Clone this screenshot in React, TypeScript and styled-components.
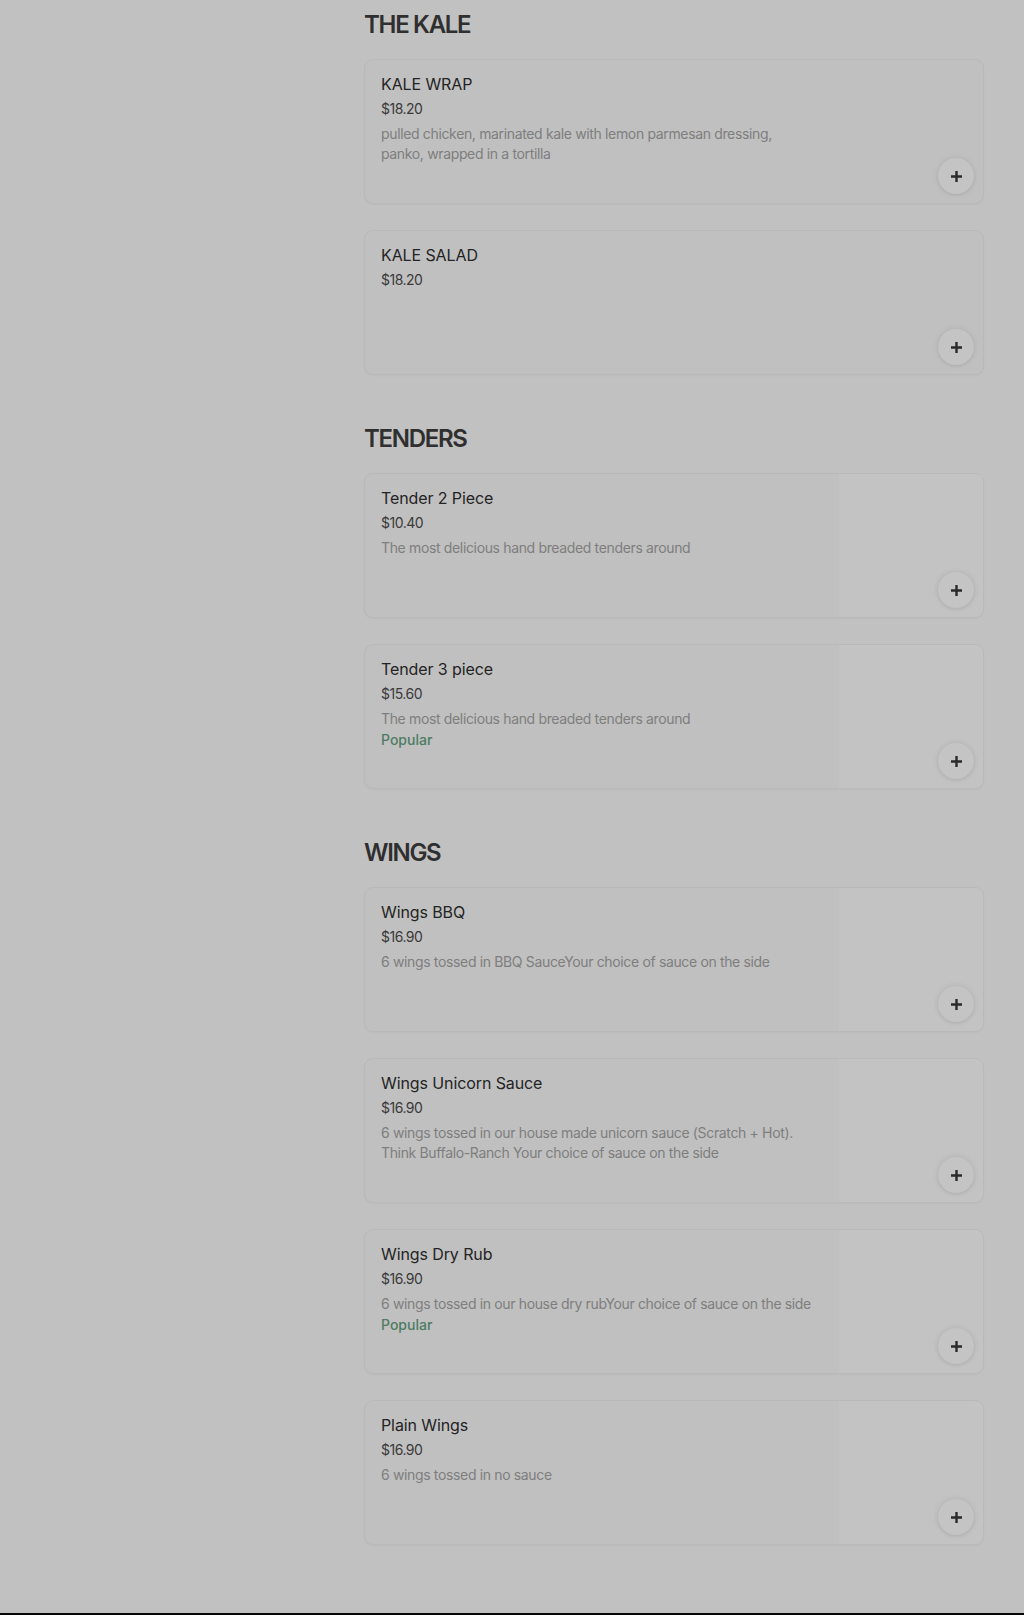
import React from "react";
import styled, { createGlobalStyle } from "styled-components";

const GlobalStyle = createGlobalStyle`
  html, body {
    margin: 0;
    padding: 0;
    background: #c1c1c1;
  }
  body {
    font-family: Inter, "Noto Sans", "Liberation Sans", sans-serif;
    -webkit-font-smoothing: antialiased;
  }
  * { box-sizing: border-box; }
`;

const Page = styled.div`
  display: grid;
  grid-template-columns: 364px 620px;
  padding: 9px 40px 68px 0;
  background: #c1c1c1;
`;

const Sidebar = styled.aside``;

const Main = styled.main`
  display: flex;
  flex-direction: column;
  gap: 48px;
`;

const Section = styled.section`
  display: flex;
  flex-direction: column;
`;

const SectionTitle = styled.h2`
  margin: 0 0 18px;
  font-family: Inter, "Liberation Sans", sans-serif;
  font-size: 24px;
  line-height: 32px;
  font-weight: 600;
  letter-spacing: -1.3px;
  color: #2f2f2f;
`;

const CardList = styled.div`
  display: flex;
  flex-direction: column;
  gap: 26px;
`;

const Card = styled.article`
  display: grid;
  grid-template-columns: 1fr 144px;
  column-gap: 16px;
  height: 145px;
  border: 1px solid #b9b9b9;
  border-radius: 9px;
  background: #c0c0c0;
  box-shadow: 0 1px 2px rgba(0, 0, 0, 0.03);
  overflow: hidden;
`;

const Info = styled.div`
  display: flex;
  flex-direction: column;
  padding: 14px 0 0 16px;
  min-width: 0;
`;

const ItemName = styled.div`
  font-size: 16px;
  line-height: 20px;
  font-weight: 400;
  letter-spacing: -0.1px;
  color: #242424;
`;

const Price = styled.div`
  margin-top: 5px;
  font-size: 14px;
  line-height: 20px;
  font-weight: 400;
  letter-spacing: -0.5px;
  color: #3a3a3a;
`;

const Description = styled.div`
  margin-top: 5px;
  max-width: 434px;
  font-size: 14px;
  line-height: 19.5px;
  font-weight: 400;
  letter-spacing: -0.35px;
  color: #7e7e7e;
`;

const Badge = styled.div`
  margin-top: 1px;
  font-size: 14px;
  line-height: 20px;
  font-weight: 500;
  color: #4d7c63;
`;

const ImageArea = styled.div<{ $filled: boolean }>`
  position: relative;
  background: ${(p) => (p.$filled ? "#c3c3c3" : "transparent")};
`;

const AddButton = styled.button`
  position: absolute;
  right: 9px;
  bottom: 9px;
  width: 36px;
  height: 36px;
  border: none;
  border-radius: 50%;
  padding: 0;
  display: flex;
  align-items: center;
  justify-content: center;
  background: #c4c4c4;
  box-shadow: 0 0 6px rgba(0, 0, 0, 0.09), 0 1px 3px rgba(0, 0, 0, 0.06);
  color: #2a2a2a;
  cursor: pointer;
`;

const Footer = styled.footer`
  height: 120px;
  background: #050505;
`;

type Item = {
  name: string;
  price: string;
  desc?: string;
  popular?: boolean;
  image?: boolean;
};

type Group = { title: string; items: Item[] };

const menu: Group[] = [
  {
    title: "THE KALE",
    items: [
      {
        name: "KALE WRAP",
        price: "$18.20",
        desc: "pulled chicken, marinated kale with lemon parmesan dressing, panko, wrapped in a tortilla",
      },
      { name: "KALE SALAD", price: "$18.20" },
    ],
  },
  {
    title: "TENDERS",
    items: [
      {
        name: "Tender 2 Piece",
        price: "$10.40",
        desc: "The most delicious hand breaded tenders around",
        image: true,
      },
      {
        name: "Tender 3 piece",
        price: "$15.60",
        desc: "The most delicious hand breaded tenders around",
        popular: true,
        image: true,
      },
    ],
  },
  {
    title: "WINGS",
    items: [
      {
        name: "Wings BBQ",
        price: "$16.90",
        desc: "6 wings tossed in BBQ SauceYour choice of sauce on the side",
        image: true,
      },
      {
        name: "Wings Unicorn Sauce",
        price: "$16.90",
        desc: "6 wings tossed in our house made unicorn sauce (Scratch + Hot). Think Buffalo-Ranch Your choice of sauce on the side",
        image: true,
      },
      {
        name: "Wings Dry Rub",
        price: "$16.90",
        desc: "6 wings tossed in our house dry rubYour choice of sauce on the side",
        popular: true,
        image: true,
      },
      {
        name: "Plain Wings",
        price: "$16.90",
        desc: "6 wings tossed in no sauce",
        image: true,
      },
    ],
  },
];

const PlusIcon = () => (
  <svg width="13" height="13" viewBox="0 0 13 13" aria-hidden="true">
    <path d="M6.5 1v11M1 6.5h11" stroke="currentColor" strokeWidth="2.4" strokeLinecap="butt" />
  </svg>
);

const MenuCard = ({ item }: { item: Item }) => (
  <Card>
    <Info>
      <ItemName>{item.name}</ItemName>
      <Price>{item.price}</Price>
      {item.desc && <Description>{item.desc}</Description>}
      {item.popular && <Badge>Popular</Badge>}
    </Info>
    <ImageArea $filled={!!item.image}>
      <AddButton aria-label={`Add ${item.name}`}>
        <PlusIcon />
      </AddButton>
    </ImageArea>
  </Card>
);

export default function App() {
  return (
    <>
      <GlobalStyle />
      <Page>
        <Sidebar />
        <Main>
          {menu.map((g) => (
            <Section key={g.title}>
              <SectionTitle>{g.title}</SectionTitle>
              <CardList>
                {g.items.map((it) => (
                  <MenuCard key={it.name} item={it} />
                ))}
              </CardList>
            </Section>
          ))}
        </Main>
      </Page>
      <Footer />
    </>
  );
}
